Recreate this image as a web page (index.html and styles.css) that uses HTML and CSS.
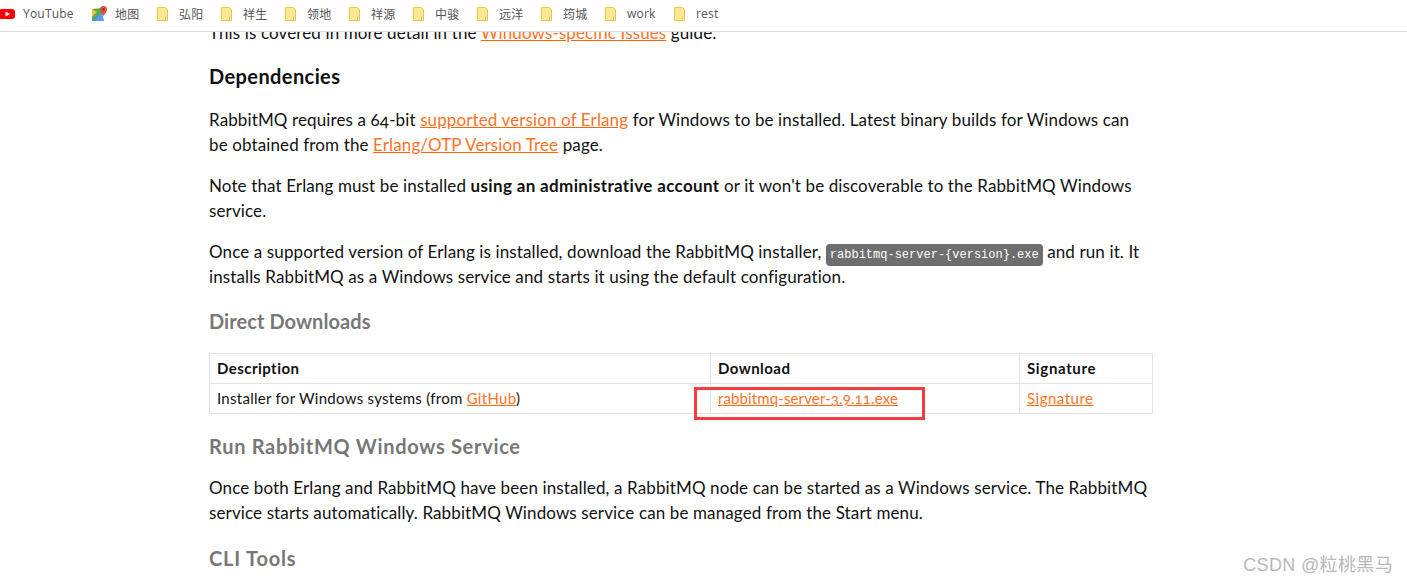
FILE: index.html
```html
<!DOCTYPE html>
<html lang="zh">
<head>
<meta charset="utf-8">
<title>RabbitMQ</title>
<link rel="stylesheet" href="styles.css">
</head>
<body>
<nav class="bar">
  <a class="bm bm-yt"><svg class="ico ico-yt" width="16" height="16" viewBox="0 0 16 16"><rect x="-1" y="3" width="16" height="10" rx="3" fill="#f00"/><path d="M5.500 5.500v5l4.500-2.500z" fill="#fff"/></svg>YouTube</a>
  <a class="bm bm-map"><svg class="ico ico-yt" width="16" height="16" viewBox="0 0 16 16"><path d="M0 3l10-1v13H0z" fill="#4caf50"/><path d="M0 15l6-6 6 6z" fill="#4a8cf0"/><path d="M0 3l5 3-5 5z" fill="#f6c33b"/><path d="M2 15l8-9 2 9z" fill="#5b9bf5"/><path d="M11.500 0a3.500 3.500 0 0 0-3.500 3.500c0 2.500 3.500 6.500 3.500 6.500s3.500-4 3.500-6.500A3.500 3.500 0 0 0 11.500 0z" fill="#e0533f"/><circle cx="11.500" cy="3.500" r="1.200" fill="#9c2b20"/></svg>地图</a>
  <a class="bm"><svg class="ico" width="16" height="16" viewBox="0 0 16 16"><use href="#f"/></svg>弘阳</a>
  <a class="bm"><svg class="ico" width="16" height="16" viewBox="0 0 16 16"><use href="#f"/></svg>祥生</a>
  <a class="bm"><svg class="ico" width="16" height="16" viewBox="0 0 16 16"><use href="#f"/></svg>领地</a>
  <a class="bm"><svg class="ico" width="16" height="16" viewBox="0 0 16 16"><use href="#f"/></svg>祥源</a>
  <a class="bm"><svg class="ico" width="16" height="16" viewBox="0 0 16 16"><use href="#f"/></svg>中骏</a>
  <a class="bm"><svg class="ico" width="16" height="16" viewBox="0 0 16 16"><use href="#f"/></svg>远洋</a>
  <a class="bm"><svg class="ico" width="16" height="16" viewBox="0 0 16 16"><use href="#f"/></svg>筠城</a>
  <a class="bm bm-work"><svg class="ico" width="16" height="16" viewBox="0 0 16 16"><use href="#f"/></svg>work</a>
  <a class="bm"><svg class="ico" width="16" height="16" viewBox="0 0 16 16"><use href="#f"/></svg>rest</a>
</nav>
<svg class="defs" width="0" height="0"><defs><g id="f"><path d="M1.500 1.500h8l2 2v11h-10z" fill="#ffe793" stroke="#eec54d" stroke-width="1"/><rect x="9.500" y="11.500" width="2" height="3" fill="#fff" stroke="#eec54d"/></g></defs></svg>
<main class="page">
  <div class="content">
    <p class="first">This is covered in more detail in the <a href="#">Windows-specific Issues</a> guide.</p>
    <h3>Dependencies</h3>
    <p>RabbitMQ requires a 64-bit <a href="#">supported version of Erlang</a> for Windows to be installed. Latest binary builds for Windows can be obtained from the <a href="#">Erlang/OTP Version Tree</a> page.</p>
    <p>Note that Erlang must be installed <strong>using an administrative account</strong> or it won't be discoverable to the RabbitMQ Windows service.</p>
    <p>Once a supported version of Erlang is installed, download the RabbitMQ installer, <code>rabbitmq-server-{version}.exe</code> and run it. It installs RabbitMQ as a Windows service and starts it using the default configuration.</p>
    <h4 class="direct">Direct Downloads</h4>
    <table>
      <thead><tr><th class="c1">Description</th><th class="c2">Download</th><th class="c3">Signature</th></tr></thead>
      <tbody><tr><td>Installer for Windows systems (from <a href="#">GitHub</a>)</td><td><a class="file" href="#">rabbitmq-server-3.9.11.exe</a></td><td><a class="sig" href="#">Signature</a></td></tr></tbody>
    </table>
    <h4 class="after">Run RabbitMQ Windows Service</h4>
    <p>Once both Erlang and RabbitMQ have been installed, a RabbitMQ node can be started as a Windows service. The RabbitMQ service starts automatically. RabbitMQ Windows service can be managed from the Start menu.</p>
    <h4 class="after cli">CLI Tools</h4>
  </div>
  <div class="mark"></div>
  <div class="wm">CSDN @粒桃黑马</div>
</main>
</body>
</html>
```
FILE: styles.css
```css
* { box-sizing: border-box; }
html, body { margin: 0; height: 100%; overflow: hidden; background: #fff; }
body { font-family: "Lato", "Noto Sans CJK SC", sans-serif; color: #111; display: flex; flex-direction: column; }
.defs { position: absolute; }
.bar { height: 32px; flex: none; display: flex; align-items: center; padding-bottom: 4px; border-bottom: 1px solid #dcdcdc; background: #fff; font: 12px "Open Sans", "Noto Sans CJK SC", sans-serif; letter-spacing: .2px; color: #555; position: relative; z-index: 2; }
.bm { display: flex; align-items: center; width: 64px; flex: none; }
.ico { margin-right: 7px; flex: none; }
.bm-yt { width: 92px; }
.bm-map { width: 64px; }
.bm-work { width: 69px; }
.page { flex: 1; position: relative; overflow: hidden; }
.content { width: 944px; margin: -12px 0 0 209px; font-size: 17px; line-height: 25px; letter-spacing: .12px; font-variant-numeric: oldstyle-nums; }
p { margin: 0 0 16px; max-width: 940px; }
.content a { color: #ff7226; text-decoration-color: #ff6600; }
strong { letter-spacing: .35px; }
h3 { font-size: 20px; line-height: 25px; font-weight: 700; letter-spacing: .4px; margin: 19px 0 18px; color: #111; }
h4 { font-size: 20px; line-height: 25px; font-weight: 700; color: #777; letter-spacing: .7px; }
h4.direct { margin: 20px 0 19px; letter-spacing: .07px; }
h4.after { margin: 20px 0 16px; }
h4.cli { letter-spacing: .8px; margin: 21px 0 16px; }
code { font: 12px "Liberation Mono", monospace; letter-spacing: 0; color: #fff; background: #6e6e6e; border-radius: 4px; padding: 4px 4px; }
table { width: 944px; table-layout: fixed; border-collapse: collapse; font-size: 15px; line-height: 20px; letter-spacing: .28px; }
th, td { border: 1px solid #e3e3e3; padding: 4px 7px 5px; text-align: left; height: 30px; }
th { letter-spacing: .45px; }
.c3 { letter-spacing: .65px; }
.content a.file { letter-spacing: .12px; }
.content a.sig { letter-spacing: .5px; }
.c1 { width: 501px; } .c2 { width: 309px; }
.mark { position: absolute; left: 694px; top: 355px; width: 231px; height: 33px; border: 3px solid #f73b3f; }
.wm { position: absolute; right: 14px; bottom: 7px; font: 18px "Liberation Sans", "Noto Sans CJK SC", sans-serif; letter-spacing: .35px; color: #b8b8b8; }
```
